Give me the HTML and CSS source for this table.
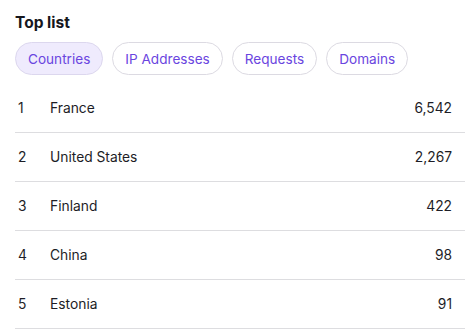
FILE: index.html
```html
<!DOCTYPE html>
<html>
<head>
<meta charset="utf-8">
<link rel="stylesheet" href="styles.css">
</head>
<body>
<div class="panel">
  <h2 class="title">Top list</h2>
  <div class="tabs">
    <span class="tab active">Countries</span>
    <span class="tab">IP Addresses</span>
    <span class="tab">Requests</span>
    <span class="tab">Domains</span>
  </div>
  <div class="rows">
    <div class="row"><span class="idx">1</span><span class="name">France</span><span class="val">6,542</span></div>
    <div class="row"><span class="idx">2</span><span class="name">United States</span><span class="val">2,267</span></div>
    <div class="row"><span class="idx">3</span><span class="name">Finland</span><span class="val">422</span></div>
    <div class="row"><span class="idx">4</span><span class="name">China</span><span class="val">98</span></div>
    <div class="row"><span class="idx">5</span><span class="name">Estonia</span><span class="val">91</span></div>
  </div>
</div>
</body>
</html>
```
FILE: styles.css
```css
html, body {
  margin: 0;
  padding: 0;
  background: #ffffff;
  font-family: Inter, "Noto Sans", sans-serif;
  color: #1d1d26;
}
.panel {
  padding: 13px 0 0 15px;
}
.title {
  margin: 0;
  font-size: 15.5px;
  font-weight: 700;
  line-height: 20px;
  color: #16161d;
}
.tabs {
  display: flex;
  gap: 9px;
  margin-top: 9px;
}
.tab {
  display: inline-flex;
  align-items: center;
  height: 31px;
  padding: 0 12px;
  border: 1px solid #dcdae2;
  border-radius: 17px;
  font-size: 13.6px;
  color: #6a45e0;
  background: #ffffff;
}
.tab.active {
  background: #efebfd;
  border-color: #dcd7ee;
}
.rows {
  margin-top: 9px;
}
.row {
  display: flex;
  align-items: center;
  height: 48px;
  border-bottom: 1px solid #dddde0;
  font-size: 13.8px;
  color: #1d1d26;
}
.idx {
  width: 32px;
  padding-left: 3px;
}
.name {
  flex: 1;
}
.val {
  padding-right: 13px;
}
```
